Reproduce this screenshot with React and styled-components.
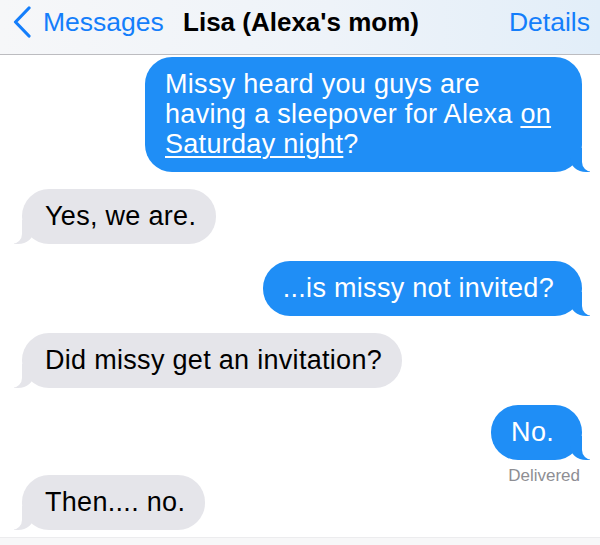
import React from "react";
import styled, { createGlobalStyle } from "styled-components";

const GlobalStyle = createGlobalStyle`
  html, body {
    margin: 0;
    padding: 0;
    background: #ffffff;
  }
  body {
    font-family: "Liberation Sans", Arial, sans-serif;
    -webkit-font-smoothing: antialiased;
  }
`;

const BLUE = "#1f8ef6";
const GRAY = "#e5e5ea";

const Screen = styled.div`
  height: 100vh;
  display: flex;
  flex-direction: column;
  overflow: hidden;
`;

const NavBar = styled.header`
  height: 55px;
  flex-shrink: 0;
  display: grid;
  grid-template-columns: 1fr auto 1fr;
  align-items: start;
  padding: 6px 10px 0 12px;
  box-sizing: border-box;
  background: linear-gradient(90deg, #f6f7f9 0%, #eef3f9 55%, #e2eef9 100%);
  border-bottom: 1px solid #bcbcc0;
`;

const BackButton = styled.div`
  display: flex;
  align-items: center;
  gap: 11px;
  height: 32px;
`;

const NavLink = styled.span`
  font-size: 26.5px;
  line-height: 32px;
  color: #147efb;
`;

const Title = styled.div`
  font-size: 26px;
  line-height: 32px;
  font-weight: bold;
  color: #000;
  white-space: nowrap;
`;

const NavRight = styled.div`
  display: flex;
  justify-content: flex-end;
`;

const Thread = styled.main`
  flex: 1;
  display: flex;
  flex-direction: column;
  gap: 17px;
  padding: 2px 18px 0 22px;
`;

const Row = styled.div`
  display: flex;
  flex-direction: column;
  align-items: ${(p) => (p.$mine ? "flex-end" : "flex-start")};
`;

const Bubble = styled.div`
  position: relative;
  max-width: 437px;
  box-sizing: border-box;
  padding: ${(p) => (p.$mine ? "12px 28px 13px 20px" : "12px 20px 13px 23px")};
  border-radius: 27px;
  background: ${(p) => (p.$mine ? BLUE : GRAY)};
  color: ${(p) => (p.$mine ? "#ffffff" : "#000000")};
  font-size: 27px;
  line-height: 30px;
  letter-spacing: 0.3px;

  &::before,
  &::after {
    content: "";
    position: absolute;
    bottom: 0;
    height: 24px;
  }

  &::before {
    width: 20px;
    background: ${(p) => (p.$mine ? BLUE : GRAY)};
    ${(p) =>
      p.$mine
        ? "right: -8px; border-bottom-left-radius: 16px 14px;"
        : "left: -8px; border-bottom-right-radius: 16px 14px;"}
  }

  &::after {
    width: 26px;
    background: #ffffff;
    ${(p) =>
      p.$mine
        ? "right: -26px; border-bottom-left-radius: 10px;"
        : "left: -26px; border-bottom-right-radius: 10px;"}
  }
`;

const Link = styled.span`
  text-decoration: underline;
  text-decoration-thickness: 1.5px;
  text-underline-offset: 3px;
`;

const Status = styled.div`
  margin: 6px 2px -28px 0;
  font-size: 17px;
  line-height: 20px;
  color: #8e8e93;
`;

const InputEdge = styled.div`
  height: 7px;
  flex-shrink: 0;
  background: #f7f7f8;
  border-top: 1px solid #ececee;
`;

const messages = [
  {
    mine: true,
    text: (
      <>
        Missy heard you guys are having a sleepover for Alexa{" "}
        <Link>on Saturday night</Link>?
      </>
    ),
  },
  { mine: false, text: "Yes, we are." },
  { mine: true, text: "...is missy not invited?" },
  { mine: false, text: "Did missy get an invitation?" },
  { mine: true, text: "No.", status: "Delivered" },
  { mine: false, text: "Then.... no." },
];

const App = () => {
  return (
    <Screen>
      <GlobalStyle />
      <NavBar>
        <BackButton>
          <svg width="20" height="32" viewBox="0 0 20 32">
            <polyline
              points="17,2 3.5,16 17,30"
              fill="none"
              stroke="#147efb"
              strokeWidth="3.2"
              strokeLinecap="round"
              strokeLinejoin="round"
            />
          </svg>
          <NavLink>Messages</NavLink>
        </BackButton>
        <Title>Lisa (Alexa's mom)</Title>
        <NavRight>
          <NavLink>Details</NavLink>
        </NavRight>
      </NavBar>

      <Thread>
        {messages.map((msg, index) => (
          <Row key={index} $mine={msg.mine}>
            <Bubble $mine={msg.mine}>{msg.text}</Bubble>
            {msg.status && <Status>{msg.status}</Status>}
          </Row>
        ))}
      </Thread>

      <InputEdge />
    </Screen>
  );
};

export default App;
